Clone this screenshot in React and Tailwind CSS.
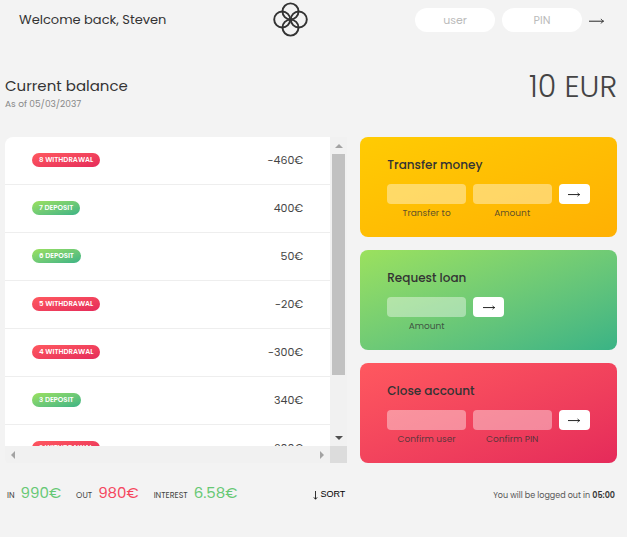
import React from 'react';

const movements = [
  { id: 8, type: 'withdrawal', value: '-460€' },
  { id: 7, type: 'deposit', value: '400€' },
  { id: 6, type: 'deposit', value: '50€' },
  { id: 5, type: 'withdrawal', value: '-20€' },
  { id: 4, type: 'withdrawal', value: '-300€' },
  { id: 3, type: 'deposit', value: '340€' },
  { id: 2, type: 'withdrawal', value: '-200€' },
];

const pillColors = {
  deposit: 'from-[#39b385] to-[#9be15d]',
  withdrawal: 'from-[#e52a5a] to-[#ff585f]',
};

function Logo() {
  return (
    <svg width="36" height="36" viewBox="0 0 36 36" fill="none" stroke="#333" strokeWidth="1.9" role="img" aria-label="Logo">
      <circle cx="17.5" cy="9.4" r="8" />
      <circle cx="17.5" cy="25.6" r="8" />
      <circle cx="9.2" cy="17.5" r="8" />
      <circle cx="25.8" cy="17.5" r="8" />
    </svg>
  );
}

function Arrow({ className }) {
  return (
    <svg className={className} viewBox="0 0 14 6" fill="none" stroke="currentColor" aria-hidden="true">
      <path d="M0 3H13.5" />
      <path d="M11.2 0.8C11.8 2 12.6 2.7 13.7 3C12.6 3.3 11.8 4 11.2 5.2" strokeWidth="0.8" />
    </svg>
  );
}

function Caret({ className, d }) {
  return (
    <svg className={className} width="8" height="8" viewBox="0 0 8 8" fill="currentColor">
      <path d={d} />
    </svg>
  );
}

function Movement({ id, type, value }) {
  return (
    <li className="flex h-12 shrink-0 items-center justify-between border-b border-[#eee] px-[27px] pb-px">
      <span className={`h-3.5 rounded-full bg-linear-to-tl px-[7px] text-[7px] leading-[14px] font-semibold text-white uppercase ${pillColors[type]}`}>
        {id} {type}
      </span>
      <span className="text-[11px]">{value}</span>
    </li>
  );
}

function Movements() {
  return (
    <section className="row-span-3 flex h-[326px] flex-col overflow-hidden rounded-tl-lg rounded-bl-sm">
      <div className="flex min-h-0 flex-1">
        <ul className="flex flex-1 flex-col overflow-hidden bg-white">
          {movements.map((m) => (
            <Movement key={m.id} {...m} />
          ))}
        </ul>
        <div className="flex w-[17px] flex-col items-center bg-[#f1f1f1]" aria-hidden="true">
          <div className="flex h-[17px] items-center text-[#a3a3a3]">
            <Caret d="M0 6L4 2L8 6Z" />
          </div>
          <div className="h-[221px] w-[13px] bg-[#c1c1c1]" />
          <div className="mt-auto flex h-[17px] items-center text-[#505050]">
            <Caret d="M0 2H8L4 6Z" />
          </div>
        </div>
      </div>
      <div className="flex h-[17px] items-center bg-[#f1f1f1] text-[#a3a3a3]" aria-hidden="true">
        <Caret className="ml-1" d="M6 0V8L2 4Z" />
        <Caret className="mr-1 ml-auto" d="M2 0V8L6 4Z" />
        <div className="h-full w-[17px] bg-[#dcdcdc]" />
      </div>
    </section>
  );
}

function Operation({ title, fields, color, name }) {
  const columns = fields.length === 1 ? 'grid-cols-[5fr_2fr_5fr]' : 'grid-cols-[5fr_5fr_2fr]';
  return (
    <section className={`h-[100px] rounded-lg bg-linear-to-tl px-[27px] pt-5 ${color}`}>
      <h2 className="text-xs leading-4 font-medium text-[#333]">{title}</h2>
      <form className={`mt-[11px] grid gap-x-[7px] ${columns}`} onSubmit={(e) => e.preventDefault()}>
        {fields.map((field, i) => (
          <div key={field} className="flex min-w-0 flex-col items-center">
            <input
              id={`${name}-${i}`}
              className="h-5 w-full rounded bg-white/40 px-1 text-center text-[10px] outline-none"
            />
            <label htmlFor={`${name}-${i}`} className="mt-0.5 text-[9px] leading-[14px] text-[#333]/80">
              {field}
            </label>
          </div>
        ))}
        <button className="flex h-5 items-center justify-center rounded bg-white text-black" aria-label={title}>
          <Arrow className="mt-0.5 w-3" />
        </button>
      </form>
    </section>
  );
}

function Summary({ label, value, color }) {
  return (
    <p className="flex items-baseline gap-1.5">
      <span className="text-[8px] uppercase">{label}</span>
      <span className={`text-[15px] leading-5 ${color}`}>{value}</span>
    </p>
  );
}

export default function App() {
  return (
    <div className="min-h-screen bg-[#f3f3f3] font-[Poppins,Inter,sans-serif] text-[#444]">
      <nav className="flex h-10 items-center justify-between pr-[23px] pl-[19px]">
        <p className="text-[13px] text-[#333]">Welcome back, Steven</p>
        <Logo />
        <form className="flex items-center gap-[7px]" onSubmit={(e) => e.preventDefault()}>
          <input
            aria-label="user"
            placeholder="user"
            className="h-6 w-20 rounded-full bg-white text-center text-[11px] outline-none placeholder:text-[#bbb]"
          />
          <input
            aria-label="PIN"
            placeholder="PIN"
            className="h-6 w-20 rounded-full bg-white text-center text-[11px] outline-none placeholder:text-[#bbb]"
          />
          <button className="text-[#333]" aria-label="Log in">
            <Arrow className="mt-0.5 w-[15px]" />
          </button>
        </form>
      </nav>

      <main className="grid grid-cols-[4fr_3fr] gap-[13px] pr-2.5 pl-[5px]">
        <header className="col-span-2 flex h-[84px] items-end justify-between">
          <div className="pb-[14px]">
            <h1 className="text-[15px] leading-6 text-[#333]">Current balance</h1>
            <p className="text-[9px] leading-3 text-[#888]">As of 05/03/2037</p>
          </div>
          <p className="pb-[17px] text-[30px] leading-10 font-light">10 EUR</p>
        </header>

        <Movements />
        <Operation
          name="transfer"
          title="Transfer money"
          fields={['Transfer to', 'Amount']}
          color="from-[#ffb003] to-[#ffcb03]"
        />
        <Operation name="loan" title="Request loan" fields={['Amount']} color="from-[#39b385] to-[#9be15d]" />
        <Operation
          name="close"
          title="Close account"
          fields={['Confirm user', 'Confirm PIN']}
          color="from-[#e52a5a] to-[#ff585f]"
        />

        <footer className="flex items-center justify-between pt-[7px] pr-0.5 pl-0.5">
          <div className="flex gap-[15px]">
            <Summary label="In" value="990€" color="text-[#66c873]" />
            <Summary label="Out" value="980€" color="text-[#f5465d]" />
            <Summary label="Interest" value="6.58€" color="text-[#66c873]" />
          </div>
          <button className="mt-1 flex items-center gap-0.5 font-['Liberation_Sans',Arial,sans-serif] text-[9px] text-black">
            <svg width="5" height="9" viewBox="0 0 5 9" fill="none" stroke="currentColor" strokeWidth="0.8" aria-hidden="true">
              <path d="M2.5 0V8M0.8 6.3L2.5 8.3L4.2 6.3" />
            </svg>
            SORT
          </button>
        </footer>
        <p className="pt-[14px] pr-0.5 text-right text-[8px] leading-3 text-[#555]">
          You will be logged out in <span className="font-semibold text-[#333]">05:00</span>
        </p>
      </main>
    </div>
  );
}
